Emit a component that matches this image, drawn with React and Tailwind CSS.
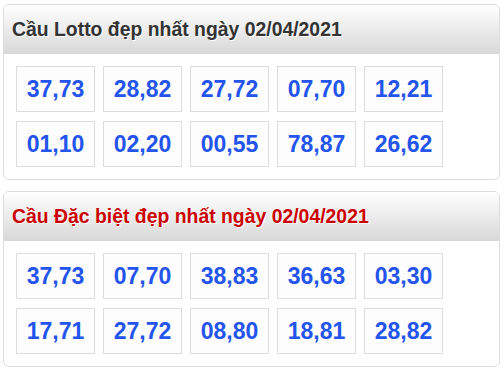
import React from 'react';

const panels = [
    {
        title: 'Cầu Lotto đẹp nhất ngày 02/04/2021',
        titleClass: 'text-[#333333]',
        rows: [
            ['37,73', '28,82', '27,72', '07,70', '12,21'],
            ['01,10', '02,20', '00,55', '78,87', '26,62'],
        ],
    },
    {
        title: 'Cầu Đặc biệt đẹp nhất ngày 02/04/2021',
        titleClass: 'text-[#cc0000]',
        rows: [
            ['37,73', '07,70', '38,83', '36,63', '03,30'],
            ['17,71', '27,72', '08,80', '18,81', '28,82'],
        ],
    },
];

const Panel = ({ title, titleClass, rows }) => (
    <div className="w-[497px] border border-[#dddddd] rounded-[6px] overflow-hidden bg-white">
        <div className="h-[49px] flex items-center pl-[8px] bg-gradient-to-b from-[#ffffff] to-[#d8d8d8]">
            <h2 className={`text-[19.4px] font-bold [text-shadow:1px_1px_0_#ffffff] ${titleClass}`}>{title}</h2>
        </div>
        <div className="flex flex-col gap-[9px] px-[12px] py-[12px]">
            {rows.map((row, i) => (
                <div key={i} className="flex gap-[8px]">
                    {row.map((n) => (
                        <div
                            key={n}
                            className="w-[79px] h-[46px] border border-[#dddddd] bg-[#fdfdfd] flex items-center justify-center text-[23px] font-bold text-[#2354ec]"
                        >
                            {n}
                        </div>
                    ))}
                </div>
            ))}
        </div>
    </div>
);

const App = () => (
    <div className="pt-[4px] pl-[3px] flex flex-col gap-[11px] bg-white min-h-[370px] font-['Liberation_Sans',Arial,sans-serif]">
        {panels.map((p) => (
            <Panel key={p.title} {...p} />
        ))}
    </div>
);

export default App;
